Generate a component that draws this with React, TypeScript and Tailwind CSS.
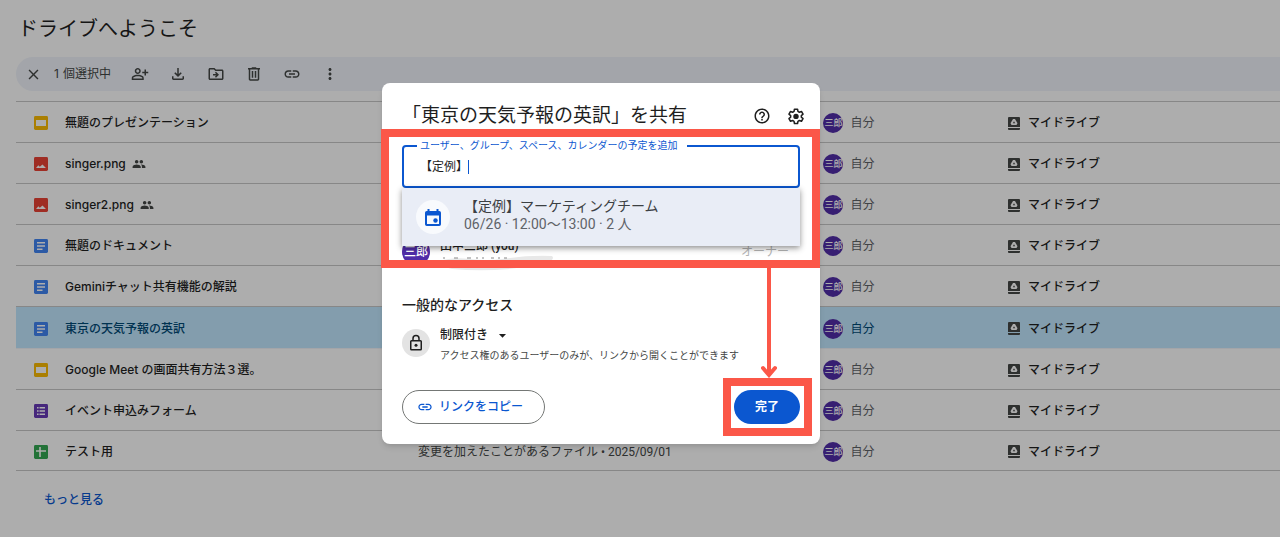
import { useState, type ReactNode } from 'react';
import {
  MdArrowDropDown,
  MdClose,
  MdHelpOutline,
  MdLink,
  MdMoreVert,
  MdOutlineDriveFileMove,
  MdOutlinePersonAddAlt,
  MdPeople,
} from 'react-icons/md';

type FileKind = 'slides' | 'image' | 'doc' | 'form' | 'sheet';

type DriveFile = {
  name: string;
  kind: FileKind;
  shared?: boolean;
  selected?: boolean;
  reason?: string;
};

const files: DriveFile[] = [
  { name: '無題のプレゼンテーション', kind: 'slides' },
  { name: 'singer.png', kind: 'image', shared: true },
  { name: 'singer2.png', kind: 'image', shared: true },
  { name: '無題のドキュメント', kind: 'doc' },
  { name: 'Geminiチャット共有機能の解説', kind: 'doc' },
  { name: '東京の天気予報の英訳', kind: 'doc', selected: true },
  { name: 'Google Meet の画面共有方法３選。', kind: 'slides' },
  { name: 'イベント申込みフォーム', kind: 'form' },
  { name: 'テスト用', kind: 'sheet', reason: '変更を加えたことがあるファイル • 2025/09/01' },
];

const kindColor: Record<FileKind, string> = {
  slides: '#fbbc04',
  image: '#ea4335',
  doc: '#4285f4',
  form: '#673ab7',
  sheet: '#34a853',
};

function FileIcon({ kind }: { kind: FileKind }) {
  return (
    <svg viewBox="0 0 14 14" className="size-[14px] shrink-0" aria-hidden="true">
      <rect width="14" height="14" rx="1.4" fill={kindColor[kind]} />
      {kind === 'slides' && <rect x="2" y="4" width="10" height="6" fill="#fff" />}
      {kind === 'image' && <path d="M2 11l2.3-2.8 1.5 1.500L8.500 7.500 12 11z" fill="#fff" />}
      {kind === 'doc' && <path d="M3 3h8v1.6H3zM3 6.2h8v1.6H3zM3 9.400h5.500V11H3z" fill="#fff" />}
      {kind === 'form' && (
        <path d="M3 3h1.6v1.6H3zM5.5 3H11v1.6H5.5zM3 6.2h1.6v1.6H3zM5.5 6.2H11v1.6H5.5zM3 9.4h1.6V11H3zM5.5 9.4H11V11H5.5z" fill="#fff" />
      )}
      {kind === 'sheet' && <path d="M5.200 2h1.600v3.200H12v1.600H6.800V12H5.200V6.800H2V5.200h3.200z" fill="#fff" />}
    </svg>
  );
}

function DriveIcon() {
  return (
    <svg viewBox="0 0 12 13" className="h-[13px] w-3 shrink-0" aria-hidden="true">
      <path d="M1 0h10a1 1 0 0 1 1 1v9H0V1a1 1 0 0 1 1-1zM0 11h12v1a1 1 0 0 1-1 1H1a1 1 0 0 1-1-1z" fill="#444746" />
      <path d="M5 2h2l2.500 4.200L8.500 8h-5l-1-1.800z" fill="#fff" />
      <path d="M6 4.300l1.200 2H4.800z" fill="#444746" />
    </svg>
  );
}

function DownloadIcon() {
  return (
    <svg viewBox="0 0 24 24" className="size-[18px]" fill="currentColor" aria-hidden="true">
      <path d="M12 16l-5-5 1.4-1.45 2.6 2.6V4h2v8.15l2.6-2.6L17 11zM6 20q-.825 0-1.412-.587T4 18v-3h2v3h12v-3h2v3q0 .825-.587 1.413T18 20z" />
    </svg>
  );
}

function TrashIcon() {
  return (
    <svg viewBox="0 0 24 24" className="size-[18px]" fill="currentColor" aria-hidden="true">
      <path d="M7 21q-.825 0-1.412-.587T5 19V6H4V4h5V3h6v1h5v2h-1v13q0 .825-.587 1.413T17 21zM17 6H7v13h10zM9 17h2V8H9zm4 0h2V8h-2z" />
    </svg>
  );
}

function GearIcon() {
  return (
    <svg viewBox="0 0 24 24" className="size-[18px]" aria-hidden="true">
      <path
        d="M9.9 3h4.2l.5 2.900 1.900 1.100 2.800-1 2.100 3.600-2.300 1.900v2l2.300 1.900-2.100 3.600-2.800-1-1.900 1.100-.5 2.900H9.900l-.5-2.900-1.900-1.100-2.800 1-2.100-3.600 2.300-1.900v-2L2.600 9.600 4.700 6l2.800 1 1.900-1.100z"
        fill="none"
        stroke="currentColor"
        strokeWidth="2"
        strokeLinejoin="round"
      />
      <circle cx="12" cy="12.500" r="3.600" fill="currentColor" />
    </svg>
  );
}

function LockIcon() {
  return (
    <svg viewBox="0 0 24 24" className="size-[18px]" fill="none" stroke="currentColor" strokeWidth="2" aria-hidden="true">
      <rect x="5" y="9" width="14" height="12" rx="1" />
      <path d="M8 9V6a4 4 0 0 1 8 0v3" />
      <circle cx="12" cy="15" r="2" fill="currentColor" stroke="none" />
    </svg>
  );
}

function CalendarIcon() {
  return (
    <svg viewBox="0 0 16 17" className="h-[17px] w-4" fill="#0b57d0" aria-hidden="true">
      <path
        fillRule="evenodd"
        d="M2.5 0h2v2h7V0h2v2h.7A1.8 1.8 0 0 1 16 3.8v11.4a1.8 1.8 0 0 1-1.8 1.8H1.8A1.8 1.8 0 0 1 0 15.2V3.8A1.8 1.8 0 0 1 1.8 2h.7zM2 6.5V15h12V6.5z"
      />
      <circle cx="10.5" cy="11.5" r="2.2" />
    </svg>
  );
}

function ToolButton({ label, children }: { label: string; children: ReactNode }) {
  return (
    <button type="button" aria-label={label} className="flex size-[18px] items-center justify-center">
      {children}
    </button>
  );
}

function Toolbar() {
  return (
    <div className="mt-[13px] ml-4 flex h-[34px] items-center rounded-l-full bg-[#f0f4fb] pl-2 text-[#444746]">
      <ToolButton label="選択を解除"><MdClose size={17} /></ToolButton>
      <span className="ml-3 flex gap-1 text-xs">
        <span>1</span>
        <span>個選択中</span>
      </span>
      <div className="ml-5 flex gap-5">
        <ToolButton label="共有"><MdOutlinePersonAddAlt size={18} /></ToolButton>
        <ToolButton label="ダウンロード"><DownloadIcon /></ToolButton>
        <ToolButton label="移動"><MdOutlineDriveFileMove size={18} /></ToolButton>
        <ToolButton label="ゴミ箱に移動"><TrashIcon /></ToolButton>
        <ToolButton label="リンクをコピー"><MdLink size={18} /></ToolButton>
        <ToolButton label="その他の操作"><MdMoreVert size={18} /></ToolButton>
      </div>
    </div>
  );
}

function FileTable() {
  return (
    <div className="mt-[10px] pl-4">
      <table className="w-full table-fixed border-separate border-spacing-0 text-xs">
        <colgroup>
          <col className="w-[31.8%]" />
          <col className="w-[32%]" />
          <col className="w-[14.6%]" />
          <col />
        </colgroup>
        <tbody className="[&>tr:last-child>td]:border-b">
          {files.map((file, i) => {
            const line = files[i - 1]?.selected ? 'border-[#f0f4f9]' : 'border-[#c7c7c7]';
            return (
              <tr key={file.name} className={file.selected ? 'h-[42px] bg-[#c2e7ff]' : 'h-[41px]'}>
                <td className={`border-t p-0 pt-[2px] ${line}`}>
                  <div className={`flex items-center pl-[18px] font-medium ${file.selected ? 'text-[#004a77]' : 'text-[#1f1f1f]'}`}>
                    <FileIcon kind={file.kind} />
                    <span className="ml-[17px]">{file.name}</span>
                    {file.shared && <MdPeople size={14} className="ml-[6px] text-[#444746]" />}
                  </div>
                </td>
                <td className={`border-t p-0 pt-[2px] font-[Roboto,'Noto_Sans_CJK_JP',sans-serif] text-[#444746] ${line}`}>
                  {file.reason}
                </td>
                <td className={`border-t p-0 pt-[2px] ${line}`}>
                  <div className={`flex items-center gap-[7px] pl-px ${file.selected ? 'text-[#004a77]' : 'text-[#5f6368]'}`}>
                    <span className="flex size-5 items-center justify-center rounded-full bg-[#512da8] text-[9px] font-medium text-white">三郎</span>
                    自分
                  </div>
                </td>
                <td className={`border-t p-0 pt-[2px] ${line}`}>
                  <div className="flex items-center gap-2 pl-px font-medium text-[#1f1f1f]">
                    <DriveIcon />
                    マイドライブ
                  </div>
                </td>
              </tr>
            );
          })}
        </tbody>
      </table>
    </div>
  );
}

function ShareDialog() {
  const [query, setQuery] = useState('【定例】');

  return (
    <div
      role="dialog"
      aria-labelledby="share-title"
      className="relative w-[438px] rounded-lg bg-white px-5 pt-[19px] pb-5 text-[#1f1f1f] shadow-md"
    >
      <div className="flex h-7 items-center">
        <h2 id="share-title" className="text-[19px]">「東京の天気予報の英訳」を共有</h2>
        <div className="-mr-[5px] ml-auto flex gap-4">
          <button type="button" aria-label="ヘルプ"><MdHelpOutline size={18} /></button>
          <button type="button" aria-label="設定"><GearIcon /></button>
        </div>
      </div>

      <div className="relative mt-2">
        <fieldset className="h-[50px] rounded border-2 border-[#0b57d0] px-[13px]">
          <legend className="pr-[9px] pl-[3px] text-[10px] leading-4 text-[#0b57d0]">
            <label htmlFor="people">ユーザー、グループ、スペース、カレンダーの予定を追加</label>
          </legend>
          <div className="relative flex h-[26px] items-center pl-[3px]">
            <input
              id="people"
              value={query}
              onChange={(e) => setQuery(e.target.value)}
              className="w-full bg-transparent text-xs outline-none"
            />
            <span className="absolute left-[51px] h-[14px] w-px bg-[#0b57d0]" />
          </div>
        </fieldset>

        {/* Calendar suggestion */}
        <button
          type="button"
          className="absolute inset-x-0 top-full z-10 flex h-[58px] items-center bg-[#e9edf6] pl-[14px] text-left shadow-[0_2px_6px_rgba(0,0,0,0.45)]"
        >
          <span className="flex size-[34px] items-center justify-center rounded-full bg-[#f8fafd]">
            <CalendarIcon />
          </span>
          <span className="ml-[14px] flex flex-col pb-1 text-sm leading-[18px] text-[#3c4043]">
            <span>【定例】マーケティングチーム</span>
            <span className="text-[#5f6368]">06/26 · 12:00〜13:00 · 2 人</span>
          </span>
        </button>
      </div>

      <div className="mt-[50px] flex h-7 items-center">
        <span className="flex size-7 items-center justify-center rounded-full bg-[#512da8] text-xs font-medium text-white">三郎</span>
        <div className="relative ml-[10px] h-7 w-[114px]">
          <div className="text-xs leading-4 font-medium">田中三郎 (you)</div>
          <svg viewBox="0 0 114 16" className="absolute top-[17px] left-0 h-4 w-[114px]" aria-hidden="true">
            <path d="M0 6Q12 2 30 4T62 4Q88 0 112 1q5 5-14 9Q54 18 12 14 2 12 0 6z" fill="#e8e8e8" />
            <path d="M3 3h2M14 3h4M27 3h4M37 2v2M43 2v2M51 3h3M59 2v2M64 3h3" stroke="#888" />
          </svg>
        </div>
        <span className="mr-[11px] ml-auto text-xs text-[#b3b3b3]">オーナー</span>
      </div>

      <h3 className="mt-[29px] text-sm leading-5 font-medium">一般的なアクセス</h3>
      <div className="mt-[10px] flex gap-[10px]">
        <span className="mt-1 flex size-7 items-center justify-center rounded-full bg-[#e3e3e3]">
          <LockIcon />
        </span>
        <div>
          <button type="button" className="flex h-5 items-center gap-[6px] text-xs font-medium">
            制限付き
            <MdArrowDropDown size={17} />
          </button>
          <p className="text-[10px] leading-[22px] text-[#444746]">アクセス権のあるユーザーのみが、リンクから開くことができます</p>
        </div>
      </div>

      <div className="mt-[23px] flex items-center justify-between text-xs font-medium">
        <button type="button" className="flex h-[34px] items-center gap-[6px] rounded-full border border-[#747775] pr-[21px] pl-[14px] text-[#0b57d0]">
          <MdLink size={16} />
          リンクをコピー
        </button>
        <button type="button" className="h-[34px] rounded-full bg-[#0b57d0] px-[21px] font-bold text-white">完了</button>
      </div>

      {/* Highlight frames and the arrow between them */}
      <div className="pointer-events-none absolute -left-px right-0 top-[46px] z-20 h-[139px] border-8 border-[#fb5748]" />
      <svg viewBox="0 0 16 110" className="pointer-events-none absolute top-[185px] right-[43px] z-20 h-[110px] w-4" fill="none" stroke="#fb5748" strokeWidth="4" aria-hidden="true">
        <path d="M8 0v106" />
        <path d="M2 100l6 7 6-7" strokeLinecap="round" />
      </svg>
      <div className="pointer-events-none absolute right-2 bottom-2 z-20 h-[58px] w-[89px] border-8 border-[#fb5748]" />
    </div>
  );
}

export default function App() {
  return (
    <div className="relative min-h-screen overflow-hidden bg-white font-[Inter,'Noto_Sans_CJK_JP',sans-serif]">
      <main>
        <h1 className="pt-[15px] pl-[18px] text-[20px] leading-[29px] text-[#1f1f1f]">ドライブへようこそ</h1>
        <Toolbar />
        <FileTable />
        <a href="#more" className="mt-[19px] ml-11 inline-block text-xs leading-5 font-medium text-[#0b57d0]">もっと見る</a>
      </main>
      <div className="absolute inset-0 flex items-start bg-black/32 pt-[83px] pl-[382px] font-[Roboto,'Noto_Sans_CJK_JP',sans-serif]">
        <ShareDialog />
      </div>
    </div>
  );
}
